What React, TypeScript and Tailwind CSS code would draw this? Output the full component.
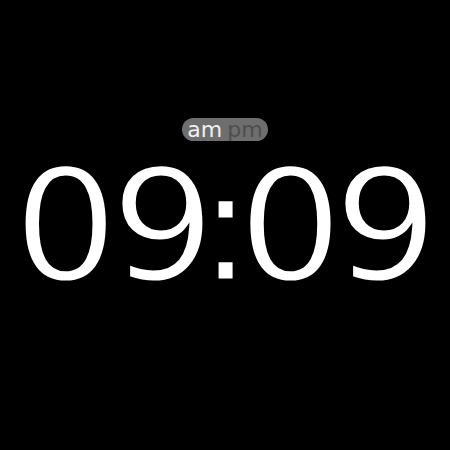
export default function App() {
    return (
        <div className="w-[450px] h-[450px] bg-black flex flex-col items-center pt-[118px] font-['DejaVu_Sans',sans-serif]">
            <div className="h-[23px] px-[5px] rounded-full bg-[#6e6e6e] flex items-center gap-[5px] text-[22px] leading-[23px]">
                <span className="text-[#f0f0f0]">am</span>
                <span className="text-[#4e4e4e]">pm</span>
            </div>
            <div className="mt-2 pl-[1.5px] flex scale-y-[0.94] whitespace-nowrap text-white text-[165px] leading-[155px] [-webkit-text-stroke:3px_black]">
                <span className="tracking-[-7.7px]">0</span>
                <span className="tracking-[-17.7px]">9</span>
                <span className="tracking-[-15.2px]">:</span>
                <span className="tracking-[-9.7px]">0</span>
                <span>9</span>
            </div>
        </div>
    );
}
